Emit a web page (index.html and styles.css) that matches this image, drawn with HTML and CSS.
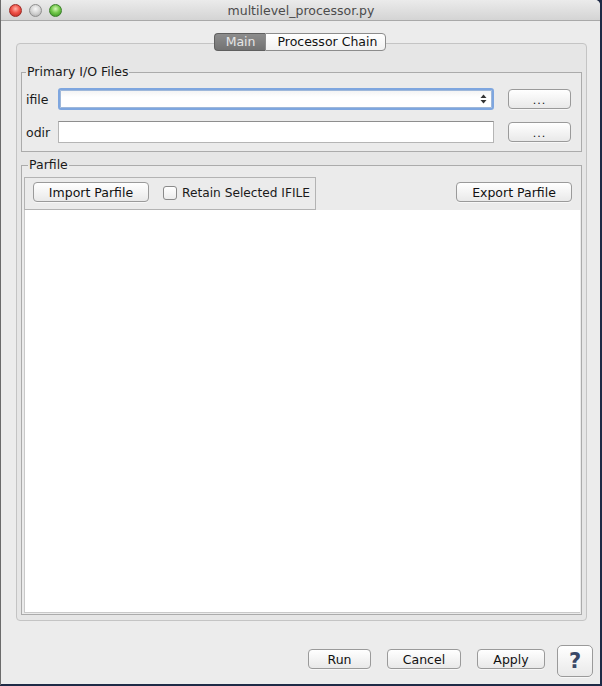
FILE: index.html
```html
<!DOCTYPE html>
<html>
<head>
<meta charset="utf-8">
<title>multilevel_processor.py</title>
<link rel="stylesheet" href="styles.css">
</head>
<body>
<div class="window">
  <div class="titlebar">
    <div class="lights">
      <span class="light red"></span>
      <span class="light gray"></span>
      <span class="light green"></span>
    </div>
    <div class="title">multilevel_processor.py</div>
  </div>
  <div class="content">
    <div class="tabs">
      <span class="tab active">Main</span>
      <span class="tab">Processor Chain</span>
    </div>
    <div class="panel">
      <fieldset class="group io">
        <legend>Primary I/O Files</legend>
        <div class="row">
          <span class="lbl">ifile</span>
          <div class="combo">
            <span class="arrows">
              <svg width="7" height="10" viewBox="0 0 7 10"><path d="M3.5 0.5 L6.5 4 L0.5 4 Z" fill="#333"/><path d="M3.5 9.5 L6.5 6 L0.5 6 Z" fill="#333"/></svg>
            </span>
          </div>
          <button class="btn dots">...</button>
        </div>
        <div class="row">
          <span class="lbl">odir</span>
          <div class="field"></div>
          <button class="btn dots">...</button>
        </div>
      </fieldset>
      <fieldset class="group parfile">
        <legend>Parfile</legend>
        <div class="toolrow">
          <div class="toolbar">
            <button class="btn import">Import Parfile</button>
            <span class="check"><span class="box"></span>Retain Selected IFILE</span>
          </div>
          <button class="btn export">Export Parfile</button>
        </div>
        <div class="area"></div>
      </fieldset>
    </div>
    <div class="footer">
      <button class="btn run">Run</button>
      <button class="btn cancel">Cancel</button>
      <button class="btn apply">Apply</button>
      <button class="btn help">?</button>
    </div>
  </div>
</div>
</body>
</html>
```
FILE: styles.css
```css
html, body {
  margin: 0;
  padding: 0;
}
body {
  width: 602px;
  height: 686px;
  background: #1e2a46;
  font-family: "DejaVu Sans", "Liberation Sans", sans-serif;
  font-size: 12.5px;
  color: #1a1a1a;
  overflow: hidden;
}
.window {
  width: 600px;
  height: 685px;
  background: #ececec;
  border-left: 1px solid #6b6b6b;
  border-radius: 0 5px 0 0;
  display: flex;
  flex-direction: column;
  box-sizing: border-box;
}
.titlebar {
  height: 22px;
  box-sizing: border-box;
  border-bottom: 1px solid #a9a9a9;
  background: linear-gradient(#ebebeb, #d4d4d4);
  border-radius: 0 5px 0 0;
  display: flex;
  align-items: center;
}
.lights {
  display: flex;
  gap: 7px;
  padding-left: 8px;
}
.light {
  width: 13px;
  height: 13px;
  border-radius: 50%;
  box-sizing: border-box;
}
.red {
  background: radial-gradient(circle at 50% 35%, #ffb3a8 0%, #f0544a 45%, #b8211b 100%);
  border: 1px solid #9d2b25;
}
.gray {
  background: radial-gradient(circle at 50% 35%, #f8f8f8 0%, #d4d4d4 50%, #a6a6a6 100%);
  border: 1px solid #8f8f8f;
}
.green {
  background: radial-gradient(circle at 50% 35%, #d6f7b8 0%, #74c94c 45%, #2f8a1c 100%);
  border: 1px solid #3b7f2a;
}
.title {
  flex: 1;
  text-align: center;
  margin-left: -40px;
  font-size: 12.5px;
  color: #4b4b4b;
  padding-right: 20px;
}
.content {
  flex: 1;
  display: flex;
  flex-direction: column;
  padding: 12px 0 0 15px;
  border-bottom: 1px solid #1e2a46;
}
.tabs {
  display: flex;
  justify-content: center;
  margin-left: -15px;
  margin-bottom: -8px;
  height: 18px;
  position: relative;
  z-index: 1;
  padding-right: 1px;
}
.tab {
  height: 18px;
  box-sizing: border-box;
  line-height: 16px;
  border: 1px solid #8c8c8c;
  background: linear-gradient(#ffffff, #f1f1f1);
  padding: 0 8px 0 11px;
  border-radius: 0 4px 4px 0;
  color: #111;
}
.tab.active {
  background: linear-gradient(#8d8d8d, #727272);
  border-color: #5f5f5f;
  color: #e6e6e6;
  border-radius: 4px 0 0 4px;
  padding: 0 10px 0 11px;
  border-right: none;
}
.panel {
  width: 571px;
  box-sizing: border-box;
  height: 578px;
  border: 1px solid #c4c4c4;
  border-radius: 4px;
  background: #e6e6e6;
  padding: 21px 4px 4px 4px;
  display: flex;
  flex-direction: column;
}
.group {
  margin: 0;
  padding: 0;
  border: 1px solid #ababab;
  min-width: 0;
  background: #ebebeb;
}
.group legend {
  padding: 0 1px;
  margin-left: 4px;
  line-height: 14px;
  height: 14px;
  color: #1a1a1a;
}
.io {
  padding: 9px 0 8px 0;
}
.row {
  display: flex;
  align-items: center;
  height: 22px;
  padding: 0 10px 0 4px;
}
.row + .row {
  margin-top: 11px;
}
.lbl {
  width: 32px;
}
.combo {
  flex: 1;
  height: 22px;
  box-sizing: border-box;
  border: 2px solid #7ea6df;
  border-radius: 3px;
  background: linear-gradient(#f2f2f2, #ffffff 40%);
  box-shadow: inset 0 0 0 1px #9fb8da;
  display: flex;
  justify-content: flex-end;
  align-items: center;
  padding-right: 5px;
}
.arrows {
  display: flex;
}
.field {
  flex: 1;
  height: 22px;
  box-sizing: border-box;
  border: 1px solid #b5b5b5;
  border-top-color: #8e8e8e;
  background: #fff;
}
.btn {
  font-family: "DejaVu Sans", "Liberation Sans", sans-serif;
  font-size: 12.5px;
  color: #111;
  height: 20px;
  box-sizing: border-box;
  border: 1px solid #9a9a9a;
  border-radius: 4px;
  background: linear-gradient(#ffffff, #f4f4f4 50%, #e9e9e9);
  padding: 0;
  line-height: 17px;
  flex-shrink: 0;
  box-shadow: 0 1px 0 rgba(255,255,255,0.6);
}
.dots {
  width: 63px;
  margin-left: 14px;
  font-size: 11px;
  letter-spacing: 1px;
  line-height: 22px;
}
.parfile {
  margin-top: 6px;
  padding: 5px 1px 1px 2px;
}
.toolrow {
  display: flex;
  align-items: flex-start;
  justify-content: space-between;
}
.toolbar {
  height: 33px;
  width: 292px;
  box-sizing: border-box;
  border: 1px solid #b3b3b3;
  display: flex;
  align-items: flex-start;
  padding: 4px 0 0 8px;
  flex-shrink: 0;
}
.import {
  width: 116px;
}
.check {
  display: flex;
  align-items: center;
  margin-left: 14px;
  height: 20px;
  white-space: nowrap;
  margin-top: 1px;
  flex-shrink: 0;
  font-size: 12.2px;
}
.box {
  width: 14px;
  height: 14px;
  box-sizing: border-box;
  border: 1px solid #8a8a8a;
  border-radius: 3px;
  background: linear-gradient(#ffffff, #ececec);
  margin-right: 5px;
}
.export {
  width: 116px;
  margin-top: 5px;
  margin-right: 8px;
}
.area {
  height: 403px;
  box-sizing: border-box;
  background: #fff;
  border-left: 1px solid #c9c9c9;
  border-bottom: 1px solid #c9c9c9;
}
.footer {
  height: 63px;
  display: flex;
  justify-content: flex-end;
  align-items: flex-start;
  padding-right: 7px;
}
.run, .cancel, .apply {
  margin-top: 28px;
}
.run { width: 63px; }
.cancel { width: 74px; margin-left: 16px; }
.apply { width: 68px; margin-left: 16px; }
.help {
  margin-top: 24px;
  margin-left: 12px;
  width: 36px;
  height: 32px;
  font-size: 21px;
  font-weight: bold;
  color: #3a4868;
  line-height: 28px;
  border-radius: 5px;
}
```
